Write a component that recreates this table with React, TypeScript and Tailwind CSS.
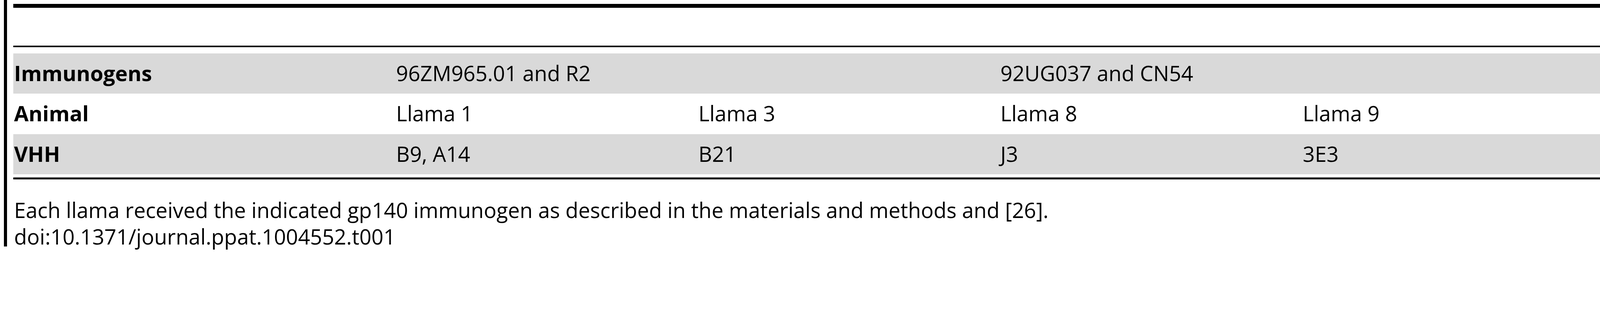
const rows = [
  { label: "Immunogens", shaded: true, cells: [{ text: "96ZM965.01 and R2", span: 2 }, { text: "92UG037 and CN54", span: 2 }] },
  { label: "Animal", shaded: false, cells: [{ text: "Llama 1" }, { text: "Llama 3" }, { text: "Llama 8" }, { text: "Llama 9" }] },
  { label: "VHH", shaded: true, cells: [{ text: "B9, A14" }, { text: "B21" }, { text: "J3" }, { text: "3E3" }] },
];

export default function App() {
  return (
    <div className="w-full h-[640px] bg-white text-black font-['Open_Sans',sans-serif] flex overflow-hidden">
      <div className="ml-[10px] w-[8px] h-[632px] bg-black shrink-0"></div>
      <div className="ml-[16px] w-[4072px] shrink-0 pt-[10px] flex flex-col">
        <div className="h-[10px] bg-black"></div>
        <div className="h-[98px]"></div>
        <div className="h-[4px] bg-black"></div>
        <div className="h-[16px]"></div>

        {rows.map((row) => (
          <div
            key={row.label}
            className={`grid grid-cols-[978px_774px_773px_774px_773px] h-[104px] text-[54px] leading-[68px] ${row.shaded ? "bg-[#d9d9d9]" : "bg-white"}`}
          >
            <div className="pl-[2px] pt-[16px] font-bold">{row.label}</div>
            {row.cells.map((c, i) => (
              <div
                key={i}
                className={`pl-[2px] pt-[16px] whitespace-nowrap ${c.span === 2 ? "col-span-2" : ""}`}
              >
                {c.text}
              </div>
            ))}
          </div>
        ))}

        <div className="h-[8px]"></div>
        <div className="h-[5px] bg-black"></div>
        <div className="pt-[44px] pl-[2px] text-[54px] leading-[68px]">
          <p>Each llama received the indicated gp140 immunogen as described in the materials and methods and [26].</p>
          <p>doi:10.1371/journal.ppat.1004552.t001</p>
        </div>
      </div>
    </div>
  );
}
